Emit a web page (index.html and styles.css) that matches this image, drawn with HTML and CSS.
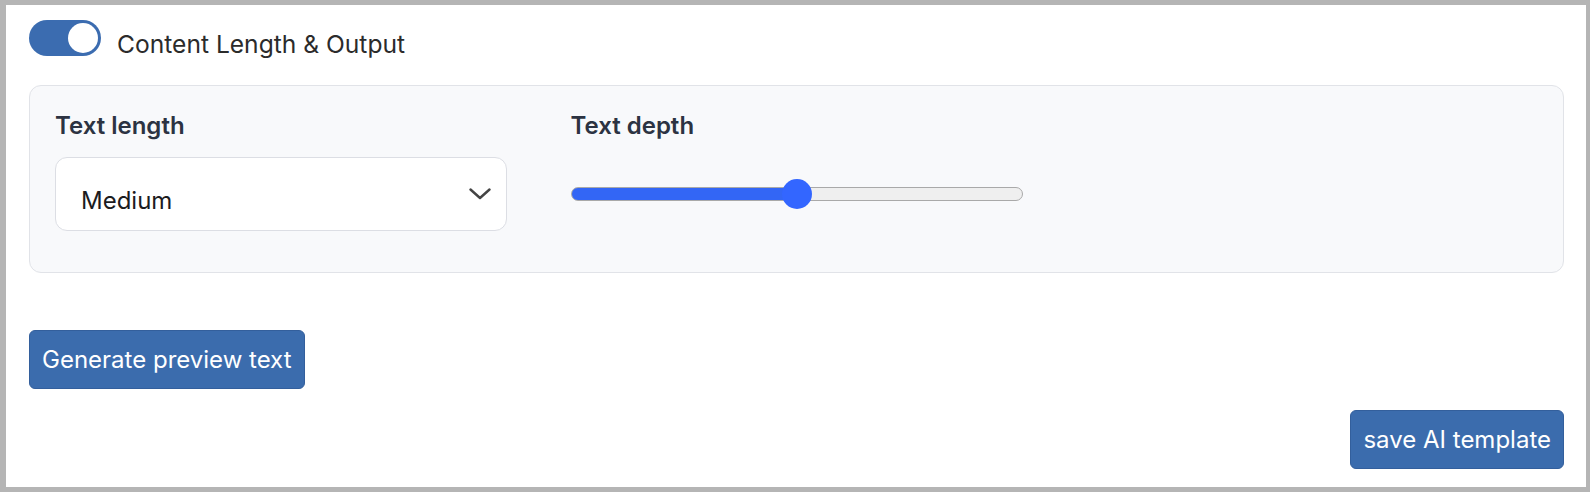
FILE: index.html
```html
<!DOCTYPE html>
<html lang="en">
<head>
<meta charset="utf-8">
<title>Content Length &amp; Output</title>
<link rel="stylesheet" href="styles.css">
</head>
<body>
<div class="frame">
  <div class="toggle-row">
    <span class="toggle" role="switch" aria-checked="true"><span class="knob"></span></span>
    <span class="toggle-label">Content Length &amp; Output</span>
  </div>

  <div class="panel">
    <div class="field">
      <label class="field-label" for="len">Text length</label>
      <div class="select-wrap">
        <select id="len" class="select">
          <option>Short</option>
          <option selected>Medium</option>
          <option>Long</option>
        </select>
        <svg class="chevron" width="22" height="12" viewBox="0 0 22 12" aria-hidden="true">
          <path d="M1.5 1.5 L11 10 L20.5 1.5" fill="none" stroke="#444" stroke-width="2.4" stroke-linecap="round" stroke-linejoin="round"/>
        </svg>
      </div>
    </div>
    <div class="field">
      <label class="field-label" for="depth">Text depth</label>
      <div class="range-wrap">
        <input id="depth" class="range" type="range" min="0" max="100" value="50">
      </div>
    </div>
    <div class="field"></div>
  </div>

  <button class="btn btn-generate" type="button">Generate preview text</button>

  <div class="actions">
    <button class="btn" type="button">save AI template</button>
  </div>
</div>
</body>
</html>
```

FILE: styles.css
```css
html, body {
  margin: 0;
  padding: 0;
}

body {
  background: #b5b5b5;
  font-family: Inter, "Noto Sans", "Liberation Sans", sans-serif;
  width: 1590px;
  height: 492px;
  overflow: hidden;
}

.frame {
  box-sizing: border-box;
  margin: 5px 4px 5px 6px;
  height: 482px;
  background: #ffffff;
  padding: 15px 22px 0 23px;
}

.toggle-row {
  display: flex;
  align-items: flex-start;
  gap: 16px;
}

.toggle {
  box-sizing: border-box;
  width: 72px;
  height: 36px;
  border-radius: 18px;
  background: #3b6cb0;
  padding: 3px;
  display: flex;
  justify-content: flex-end;
  align-items: center;
  flex: none;
}

.knob {
  width: 30px;
  height: 30px;
  border-radius: 50%;
  background: #ffffff;
}

.toggle-label {
  margin-top: 10px;
  font-size: 24.6px;
  line-height: 29px;
  color: #2b2b2b;
}

.panel {
  margin-top: 26px;
  border: 1px solid #e1e3e8;
  border-radius: 12px;
  background: #f8f9fb;
  padding: 25px 25px 41px;
  display: grid;
  grid-template-columns: repeat(3, 1fr);
  column-gap: 63.5px;
}

.field {
  display: flex;
  flex-direction: column;
  min-width: 0;
}

.field-label {
  font-size: 24px;
  line-height: 29px;
  font-weight: 600;
  color: #2c3342;
}

.select-wrap {
  position: relative;
  margin-top: 17px;
  height: 74px;
}

.select {
  -webkit-appearance: none;
  appearance: none;
  box-sizing: border-box;
  width: 100%;
  height: 74px;
  margin: 0;
  border: 1px solid #dcdee4;
  border-radius: 12px;
  background: #ffffff;
  padding: 28px 56px 15px 25px;
  font-family: inherit;
  font-size: 24px;
  line-height: 29px;
  color: #1c1c1e;
  outline: none;
}

.chevron {
  position: absolute;
  right: 16px;
  top: 31px;
  pointer-events: none;
}

.range-wrap {
  margin-top: 17px;
  height: 74px;
  display: flex;
  align-items: center;
}

.range {
  -webkit-appearance: none;
  appearance: none;
  width: 452px;
  height: 30px;
  margin: 0;
  background: transparent;
}

.range::-webkit-slider-runnable-track {
  box-sizing: border-box;
  height: 14px;
  border-radius: 7px;
  border: 1px solid #a9a9a9;
  background: linear-gradient(to right, #3366f5 0, #3366f5 50%, #efefef 50%, #efefef 100%);
}

.range::-webkit-slider-thumb {
  -webkit-appearance: none;
  appearance: none;
  width: 30px;
  height: 30px;
  margin-top: -9px;
  border: none;
  border-radius: 50%;
  background: #3366ff;
}

.btn {
  box-sizing: border-box;
  display: inline-block;
  margin: 0;
  padding: 14px 12px;
  border: 1px solid #335f9c;
  border-radius: 6px;
  background: #3b6cad;
  color: #ffffff;
  font-family: inherit;
  font-size: 24px;
  line-height: 29px;
  cursor: pointer;
}

.btn-generate {
  margin-top: 57px;
}

.actions {
  display: flex;
  justify-content: flex-end;
  margin-top: 21px;
}
```
